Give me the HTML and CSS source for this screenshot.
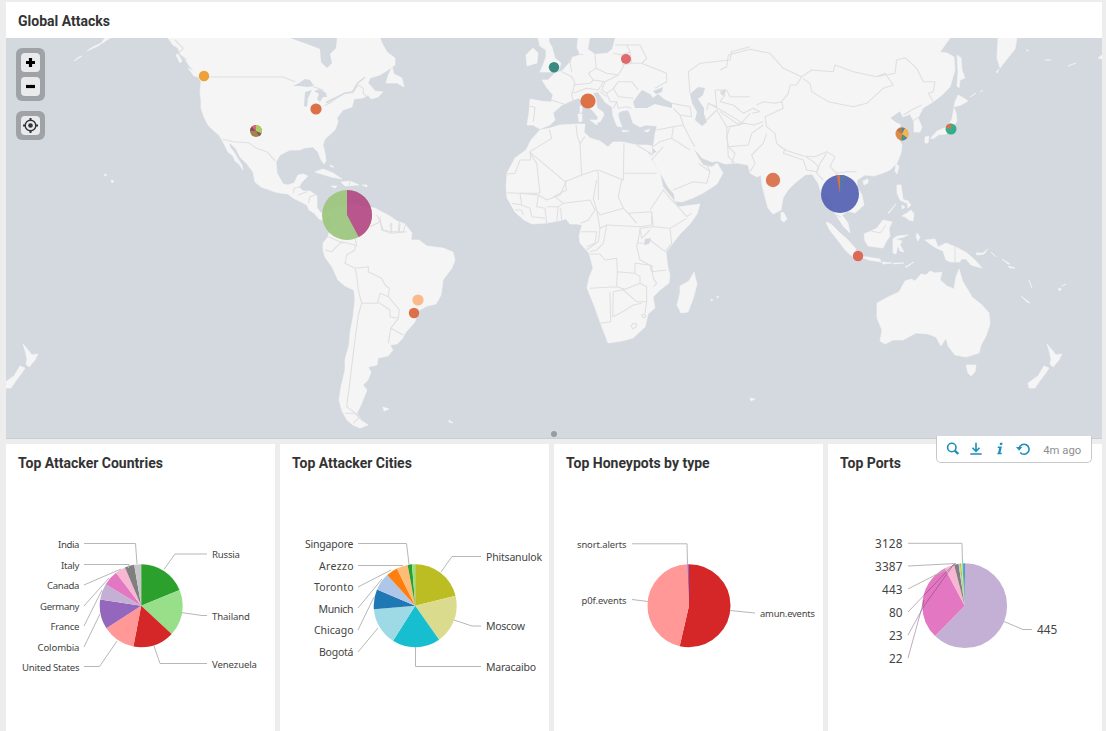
FILE: index.html
```html
<!DOCTYPE html>
<html lang="en">
<head>
<meta charset="utf-8">
<title>Global Attacks</title>
<link rel="stylesheet" href="styles.css">
</head>
<body>
<main class="dashboard">
  <section class="panel map-panel">
    <h2 class="panel-title">Global Attacks</h2>
    <div class="map">
      <svg class="map-canvas" viewBox="6 38 1096 400">
        <g class="land">
          <!-- Americas -->
          <path d="M168 38L173 45 178 48 180 54 184 58 190 67 197 74 201 82 200 92 201 100 201 108 204 117 208 125 214 131 219 135 223 142 228 152 233 156 235 161 239 164 243 170 242 165 238 159 234 152 230 147 229 142 232 145 236 149 240 157 247 164 253 172 255 182 261 187 267 189 275 192 280 193 288 194 293 198 299 201 307 205 309 210 314 213 319 219 324 221 330 216 331 225 328 237 323 243 323 250 325 257 332 267 338 280 345 286 354 290 355 300 353 317 350 333 349 345 345 360 345 370 341 387 339 400 342 411 347 420 353 425 360 428 368 425 361 420 357 413 361 405 367 390 363 385 368 380 371 372 368 367 377 365 378 358 388 356 393 350 390 345 397 344 402 339 406 332 415 322 418 311 427 306 436 304 441 295 443 280 452 268 455 260 453 252 443 248 427 246 419 240 411 240 412 233 405 224 397 221 388 215 382 212 375 208 366 207 350 203 335 207 325 212 321 213 317 208 317 196 310 191 303 191 299 187 302 182 308 176 303 174 298 175 294 183 288 185 283 184 277 173 276 162 280 155 290 150 300 150 304 148 313 147 318 152 321 160 324 164 326 161 325 153 323 145 325 139 335 130 338 122 337 118 343 110 352 107 354 99 363 98 368 95 371 99 378 97 383 92 375 91 368 83 370 78 380 75 388 70 395 65 395 58 387 52 383 45 380 38Z"/>
          <path d="M386 83L388 76 392 67 394 74 402 78 404 87 397 83ZM315 172L323 169 333 173 342 179 331 177ZM341 182L350 181 359 185 345 186ZM331 186L337 186 335 188ZM362 185L367 185 367 187ZM383 407L389 409 384 411ZM330 165L334 167 331 167ZM176 55L178 54 182 61 180 63ZM188 68L195 72 199 77 194 76Z"/>
          <path d="M110 38L104 42 98 46 87 51 91 48 101 43 105 38ZM82 56L74 61 79 57ZM111 180l3 1-2 2ZM104 174l3 1-2 1ZM449 420l4 3-4-1Z"/>
          <!-- Eurasia -->
          <path d="M578 38L577 47 580 55 573 57 570 62 562 71 555 73 548 80 542 80 547 88 553 95 551 102 541 101 530 99 529 113 527 125 533 125 540 129 550 125 555 120 553 113 562 105 573 100 579 98 585 104 592 110 598 117 597 122 600 122 604 115 603 112 597 108 596 99 593 93 598 92 605 102 612 107 613 116 617 126 622 127 619 119 618 113 622 111 628 110 630 114 633 123 640 127 646 125 657 126 655 134 653 148 657 152 650 155 654 162 662 176 668 187 674 194 675 201 682 202 693 198 703 193 711 188 717 184 723 173 717 163 712 167 703 165 698 157 693 148 697 152 702 158 712 162 717 161 725 164 737 163 748 165 750 173 757 177 761 175 762 185 765 197 768 208 773 214 781 210 783 198 788 190 795 183 805 175 812 174 818 183 822 195 830 198 832 207 835 213 843 226 850 233 848 223 842 215 848 211 855 213 864 205 862 195 857 187 857 180 865 175 874 176 883 173 890 170 897 163 901 153 902 145 895 132 901 125 895 122 890 118 900 111 903 117 910 114 914 122 914 132 920 132 922 127 918 118 923 108 933 102 942 95 950 87 955 70 954 57 947 53 940 52 950 38Z"/>
          <path d="M538 38L540 46 546 50 546 57 543 65 540 72 552 72 559 70 561 63 555 58 552 47 549 42 549 38ZM526 55L533 48 538 53 537 63 527 66ZM580 106l2 0 0 6-2 1ZM578 114l4 0 0 7-3 1ZM590 120l8 0-1 5ZM622 130l7 1-6 1ZM644 131l6-2-2 3ZM584 46l5-1-1 5-4 0Z"/>
          <!-- Africa and Madagascar -->
          <path d="M540 130L550 128 560 125 577 124 585 124 584 132 590 138 600 141 608 147 613 142 623 142 637 145 647 145 652 146 652 153 648 152 652 160 660 173 663 187 672 198 678 207 700 204 697 214 690 224 680 234 673 243 666 252 668 268 670 275 669 283 660 290 653 297 655 308 648 314 645 327 633 338 622 341 608 343 605 335 600 322 594 305 587 288 589 278 593 268 589 253 580 243 579 236 582 225 577 224 570 224 566 219 558 221 547 223 532 224 524 220 515 212 507 198 506 187 507 173 515 158 526 150 531 140Z"/>
          <path d="M694 272L697 284 693 299 688 312 681 313 677 305 680 293 680 286 689 281ZM711 299l2 1-2 1ZM717 296l2 1-2 1Z"/>
          <!-- Asian islands -->
          <path d="M781 212l3 1 3 6-3 3-3-2ZM826 222L831 224 839 232 848 240 856 249 853 257 846 251 836 238 829 229ZM858 256L867 257 880 259 881 262 869 260ZM864 234L871 231 877 228 883 220 892 222 889 229 890 236 886 242 883 248 868 246 865 241ZM893 239L897 236 908 235 904 237 895 239 902 241 900 245 904 252 900 251 898 245 896 254 893 253ZM882 262l10 1-9 1ZM893 263l11 0-9 1ZM905 267l9-5-7 5ZM917 233l3 4-2 4-2-4ZM925 240l10-1 3 8 8-4 12 5 9 5 8 7 7 8-11-3-5-6-5 0-1 3-9 0-5-2-3-9-7-3-6-4ZM976 253l7 0 5-4-4 5-7 1ZM991 252l5 5ZM1002 259l8 5-2 0ZM1008 266l7 2-5 0ZM897 185l4 0 1 7 1 7 5 3-2 1-6-3-3-7ZM902 216l5-3 4-3 3 4-1 7-4-1-4-3ZM888 213l8-9-7 9ZM902 205l3 2-3 2ZM907 200l4 5-3 3ZM896 164l3 2-2 8-2-3ZM863 181l5-2 0 4-4 2Z"/>
          <path d="M957 55L961 58 962 70 965 78 960 80 959 88 957 86 958 72ZM958 95L962 97 968 101 961 105 954 107 955 102ZM954 108L956 113 957 121 951 130 946 134 937 135 930 139 937 131 947 127 952 119ZM925 137l4-1-1 7-3 0ZM932 136l6-1-5 4ZM998 38L1017 38 1015 49 1007 59 1000 68 997 58ZM996 72l3-3-2 4ZM970 97l6-4ZM980 92l3-2ZM1026 50l3 1ZM1068 66l8-3ZM1098 58l4-3 0 4ZM1045 60l6 0Z"/>
          <!-- Oceania -->
          <path d="M959 269L963 282 968 290 972 297 982 305 989 313 990 324 986 336 981 345 979 353 966 357 955 355 948 346 946 338 941 346 936 337 928 334 916 333 903 340 893 340 885 344 880 341 882 330 877 318 877 303 888 297 899 292 905 281 911 279 915 281 921 274 926 275 930 271 935 273 942 272 940 280 947 286 954 289 956 277ZM966 365l10 0-1 7-4 4-3-3ZM1021 296l9 7-3-1ZM1029 280l3 8ZM1058 289l3-1-1 3ZM1062 286l4-2ZM750 398l5 1-4 2Z"/>
          <path id="nz" d="M1047 344L1052 350 1056 355 1062 354 1059 360 1053 367 1050 364 1051 359 1049 350ZM1044 366L1049 368 1045 374 1039 382 1035 388 1029 388 1028 383 1038 376Z"/>
          <use href="#nz" x="-1024"/>
        </g>
        <g class="water">
          <path d="M290 38L307 44 320 49 321 62 327 68 332 63 330 54 336 48 337 38ZM293 86L299 83 305 79 310 80 314 86 307 87 300 86ZM305 92L312 90 308 98 307 107 304 106ZM314 91L320 89 326 93 327 97 323 97 320 102 317 99 319 94ZM322 107L330 102 338 98 329 104Z"/>
          <path d="M590 38L615 38 612 49 607 53 595 54 588 49ZM635 108L633 102 638 95 642 90 650 94 653 98 658 94 664 99 672 103 672 108 663 106 655 104 647 108ZM653 91L663 87 662 92 656 94ZM690 94L698 87 705 88 703 95 698 99 704 108 704 114 707 122 702 126 695 120 697 112 692 103ZM645 239l6-1-2 6-5 1ZM720 93l5-4 1 2-3 5Z"/>
        </g>
        <g class="borders">
          <!-- North America -->
          <g transform="translate(150 30) scale(.33333)">
            <path d="M172 141H400L435 155M490 170L520 180M530 215L560 200 585 190 608 188 625 165 640 175 640 190 650 200M218 328L250 335 295 338 320 355 350 365 375 392M430 490L432 475 450 470M445 495L470 485M475 520L480 500 495 495M660 590L690 575 680 555M690 575L700 600 725 605 720 580M748 575L745 605 720 605M768 580L760 605 745 605M75 30L100 55 85 70 110 90M600 450L598 465"/>
            <path class="river" d="M528 218L560 204 582 190 608 185 622 160 645 142"/>
          </g>
          <!-- South America -->
          <g transform="translate(300 200) scale(.33333)">
            <path d="M75 150L95 155 125 125 165 135 165 150 140 165 135 190 165 205 205 200 205 215 245 235 255 255 268 265 265 290 240 280 232 310 185 310 175 270 170 225 165 205M185 310L175 345 165 420 155 500 148 560 140 620 180 650 160 670M135 640L165 640 190 665M265 290L298 330 295 355 270 350 270 330 232 305M295 355L272 385 310 405M272 385L265 430M165 110L170 140M85 110L130 130M240 50L245 90 275 100 320 95M275 68L275 100M300 70L298 95"/>
          </g>
          <!-- Europe, North Africa, Middle East -->
          <g transform="translate(490 30) scale(.33333)">
            <path d="M118 228L135 232 130 275M182 210L222 222M215 125L245 140 255 160 245 195 250 215M245 80L240 100 245 125M270 72L280 75M315 70L318 115 295 130 310 150 300 160 250 165M318 115L350 130 385 135 400 110 395 75 370 70M310 150L345 155 385 135M250 190L290 175 325 180 340 155M345 155L335 180 350 190 370 175 385 155 425 155 445 180M350 190L360 215 380 215 370 235M370 175L385 200 430 205M380 215L385 235 410 230 425 235M330 185L350 200M395 75L420 65 410 45 375 45M420 65L425 100 400 105M410 45L450 45 470 85 455 100 425 100M455 100L530 130 530 155 495 175M545 220L600 230 605 260 570 255 550 235M570 255L580 285 550 290 500 300M550 290L545 325 510 335 490 350M545 325L600 360M580 285L605 335 615 350M650 240L655 220 680 230 675 180 710 180 720 200 780 200M650 270L680 240 710 290 715 380 735 400M710 290L750 285 780 250M600 190L595 125 630 100 720 90 725 65 780 50M655 220L710 250 760 280M440 345L490 375M485 390L520 350M550 480L610 455 650 460 660 425 650 405M660 425L625 400"/>
            <path d="M178 298L185 325 120 365 122 390 90 390 75 430 50 432M118 365L225 455M120 370L140 400 150 490 90 490M225 455L275 435 320 420 325 430 325 510M275 435L270 340 285 320M258 285L262 320 270 340M325 420L400 450 402 340M400 430H500M225 455L230 480 190 500"/>
          </g>
          <!-- Africa -->
          <g transform="translate(490 180) scale(.33333)">
            <path d="M50 38L90 40 145 45 170 60 210 45 230 0M145 45L140 80 165 85 170 130M90 40L95 75 120 85 125 110 165 115M95 75L65 70M75 90L95 90 100 105M170 80H205L200 125M205 80L220 70 300 60 315 90 295 120 272 130M195 50L220 70M212 85L215 120M320 0L310 55 320 90 330 105 400 85 385 50 395 0M320 90L330 145 350 135 450 140 485 135 485 95 415 100 400 85M415 100L440 130M480 90L510 45 520 30 540 55 560 75 590 110 605 100M485 95L490 140 450 145M490 140L540 145 545 190 525 215 480 180M540 145L590 115M450 145L445 180 440 200 450 240 490 260M330 145L325 185 290 210M272 155H320L315 190 290 200M350 135L340 190 320 210 300 215M300 222L330 222 345 240 380 235 382 275 435 280 435 250 480 255 485 275 530 270M382 275L380 320 300 325M380 320L405 328 370 335 368 410 390 400 430 375 455 370M400 330L440 365 470 365 470 320 450 310 400 330M450 310L450 290 435 280M360 335L362 425 330 430M470 365L465 400M485 260L490 295 500 310 490 320M450 145L455 175 480 150M440 190L460 190M423 438L430 430 440 432 438 442 428 446ZM455 405L463 402 468 408 460 414Z"/>
          </g>
          <!-- Central, South and East Asia -->
          <g transform="translate(720 30) scale(.33333)">
            <path d="M0 120L20 110 25 75 90 58 150 70 190 115 245 140 275 120 340 125 345 105 400 125 470 140 495 130 520 165 490 175 440 220 400 230 325 215 275 185 270 160 248 145M470 140L525 130 530 90 555 83 590 115 610 155 645 155 640 185 625 190 640 215M245 140L230 165 210 165 205 190 185 215 165 220 130 215 110 225M185 215L190 235 135 260 140 290 165 310 170 340 195 360 250 378 285 380 320 365 345 380M0 180L15 195 0 215 40 225 70 250 100 235 120 245 95 250M0 245L50 280 75 280 100 285 130 275M75 280L30 290 20 320 25 350 45 370 35 400M25 350L85 345 95 310 130 285M140 310L130 340 95 375 105 400 90 425M195 355L190 370 250 390M250 390L260 420 290 425 295 410 280 395 255 378M320 370L300 400 290 430 310 450M345 380L330 410 350 430 380 425 410 425M350 430L355 455 380 460M550 255L575 240 605 225M575 275L595 262"/>
          </g>
          <path d="M871 231L880 233 886 225M955 247V263M834 214L841 217"/>
        </g>
        <!-- Attack markers -->
        <g class="markers">
          <circle cx="204" cy="76" r="5.2" fill="#ec9a29"/>
          <circle cx="316" cy="109" r="5.6" fill="#d9673c"/>
          <circle cx="554" cy="67.300" r="5.200" fill="#2b8379"/>
          <circle cx="626" cy="59" r="5" fill="#dd5f62"/>
          <circle cx="588" cy="101" r="7.600" fill="#dc683a"/>
          <circle cx="773" cy="180" r="7.200" fill="#d96f49"/>
          <circle cx="858" cy="256" r="5.200" fill="#df5f49"/>
          <circle cx="418" cy="300" r="5.600" fill="#fbb583"/>
          <circle cx="414" cy="313" r="5.200" fill="#d9673c"/>
          <g transform="translate(347 215) rotate(-90)"><circle r="25" fill="#9dc57d"/><circle class="wedge" r="12.5" stroke-width="25" pathLength="100" stroke="#b34a85" stroke-dasharray="42.200 100"/></g>
          <g transform="translate(840 194) rotate(-90)"><circle r="19" fill="#5461b3"/><circle class="wedge" r="9.500" stroke-width="19" pathLength="100" stroke="#4a6da8" stroke-dasharray="6 100"/><circle class="wedge" r="9.500" stroke-width="19" pathLength="100" stroke="#d9673c" stroke-dasharray="2.800 100" stroke-dashoffset="-97.200"/></g>
          <g transform="translate(256 131) rotate(-90)"><circle r="6" fill="#a17938"/><circle class="wedge" r="3" stroke-width="6" pathLength="100" stroke="#a5cc58" stroke-dasharray="32 100"/><circle class="wedge" r="3" stroke-width="6" pathLength="100" stroke="#75505c" stroke-dasharray="10 100" stroke-dashoffset="-32"/><circle class="wedge" r="3" stroke-width="6" pathLength="100" stroke="#75405f" stroke-dasharray="12 100" stroke-dashoffset="-76"/><circle class="wedge" r="3" stroke-width="6" pathLength="100" stroke="#d75b70" stroke-dasharray="12 100" stroke-dashoffset="-88"/></g>
          <g transform="translate(902 134) rotate(-90)"><circle r="6.500" fill="#e08440"/><circle class="wedge" r="3.250" stroke-width="6.500" pathLength="100" stroke="#477f9f" stroke-dasharray="8 100"/><circle class="wedge" r="3.250" stroke-width="6.500" pathLength="100" stroke="#efb640" stroke-dasharray="28 100" stroke-dashoffset="-8"/><circle class="wedge" r="3.250" stroke-width="6.500" pathLength="100" stroke="#506eae" stroke-dasharray="5 100" stroke-dashoffset="-36"/><circle class="wedge" r="3.250" stroke-width="6.500" pathLength="100" stroke="#35917e" stroke-dasharray="11 100" stroke-dashoffset="-41"/><circle class="wedge" r="3.250" stroke-width="6.500" pathLength="100" stroke="#b9713f" stroke-dasharray="16 100" stroke-dashoffset="-84"/></g>
          <g transform="translate(951 129) rotate(-90)"><circle r="5.500" fill="#29a885"/><circle class="wedge" r="2.750" stroke-width="5.500" pathLength="100" stroke="#d9673c" stroke-dasharray="20 100" stroke-dashoffset="-80"/></g>
        </g>
      </svg>
      <div class="map-controls">
        <div class="control-group">
          <button class="map-button"><svg viewBox="0 0 19 19"><path d="M9.500 5v9M5 9.500h9" stroke-width="3.200"/></svg></button>
          <button class="map-button"><svg viewBox="0 0 19 19"><path d="M5 9.500h9" stroke-width="3.200"/></svg></button>
        </div>
        <div class="control-group">
          <button class="map-button"><svg class="locate" viewBox="0 0 19 19"><circle cx="9.500" cy="9.500" r="5.300"/><circle class="dot" cx="9.500" cy="9.500" r="2.300"/><path d="M9.500 2v3M9.500 14v3M2 9.500h3M14 9.500h3" stroke-width="2"/></svg></button>
        </div>
      </div>
      <span class="resize-handle"></span>
    </div>
  </section>

  <div class="row">
    <section class="panel">
      <h2 class="panel-title">Top Attacker Countries</h2>
      <svg class="chart countries" viewBox="6 482 269 249">
        <g class="pie" transform="translate(141.200 605.700) rotate(-90)" stroke-width="41.500">
          <circle r="20.750" pathLength="100" stroke="#2ca02c" stroke-dasharray="18.800 100"/>
          <circle r="20.750" pathLength="100" stroke="#98df8a" stroke-dasharray="18.100 100" stroke-dashoffset="-18.800"/>
          <circle r="20.750" pathLength="100" stroke="#d62728" stroke-dasharray="16.200 100" stroke-dashoffset="-36.900"/>
          <circle r="20.750" pathLength="100" stroke="#ff9896" stroke-dasharray="12.700 100" stroke-dashoffset="-53.100"/>
          <circle r="20.750" pathLength="100" stroke="#9467bd" stroke-dasharray="11.700 100" stroke-dashoffset="-65.800"/>
          <circle r="20.750" pathLength="100" stroke="#c5b0d5" stroke-dasharray="6.200 100" stroke-dashoffset="-77.500"/>
          <circle r="20.750" pathLength="100" stroke="#e377c2" stroke-dasharray="5.900 100" stroke-dashoffset="-83.700"/>
          <circle r="20.750" pathLength="100" stroke="#f7b6d2" stroke-dasharray="4 100" stroke-dashoffset="-89.600"/>
          <circle r="20.750" pathLength="100" stroke="#7f7f7f" stroke-dasharray="3.600 100" stroke-dashoffset="-93.600"/>
          <circle r="20.750" pathLength="100" stroke="#c7c7c7" stroke-dasharray="2.800 100" stroke-dashoffset="-97.200"/>
        </g>
        <path class="leaders" d="M84 543.500H135.500L137 564M84 564.500H129L128.500 568M84 585L121 569M84 606L109 578M84 626L102 590M84 647L100 614M84 666.500H99.500L117 641M207 554H175L164 569.500M207 615.500H202L181 612.500M207 663.500H160L154 646"/>
        <g class="end">
          <text x="79.500" y="548" textLength="21.500">India</text><text x="79.500" y="569" textLength="18.500">Italy</text><text x="79.500" y="589" textLength="32.500">Canada</text><text x="79.500" y="610" textLength="39.500">Germany</text><text x="79.500" y="630" textLength="29">France</text><text x="79.500" y="651" textLength="42">Colombia</text><text x="79.500" y="671" textLength="57.500">United States</text>
        </g>
        <text x="212" y="558" textLength="28">Russia</text><text x="212" y="620" textLength="38">Thailand</text><text x="212" y="668" textLength="45">Venezuela</text>
      </svg>
    </section>

    <section class="panel">
      <h2 class="panel-title">Top Attacker Cities</h2>
      <svg class="chart cities" viewBox="280 482 269 249">
        <g class="pie" transform="translate(415.200 605.700) rotate(-90)" stroke-width="41.500">
          <circle r="20.750" pathLength="100" stroke="#bcbd22" stroke-dasharray="21.100 100"/>
          <circle r="20.750" pathLength="100" stroke="#dbdb8d" stroke-dasharray="19.100 100" stroke-dashoffset="-21.100"/>
          <circle r="20.750" pathLength="100" stroke="#17becf" stroke-dasharray="18.800 100" stroke-dashoffset="-40.200"/>
          <circle r="20.750" pathLength="100" stroke="#9edae5" stroke-dasharray="14.600 100" stroke-dashoffset="-59"/>
          <circle r="20.750" pathLength="100" stroke="#1f77b4" stroke-dasharray="7.800 100" stroke-dashoffset="-73.600"/>
          <circle r="20.750" pathLength="100" stroke="#aec7e8" stroke-dasharray="6.800 100" stroke-dashoffset="-81.400"/>
          <circle r="20.750" pathLength="100" stroke="#ff7f0e" stroke-dasharray="4.500 100" stroke-dashoffset="-88.200"/>
          <circle r="20.750" pathLength="100" stroke="#ffbb78" stroke-dasharray="4.300 100" stroke-dashoffset="-92.700"/>
          <circle r="20.750" pathLength="100" stroke="#2ca02c" stroke-dasharray="1.700 100" stroke-dashoffset="-97"/>
          <circle r="20.750" pathLength="100" stroke="#98df8a" stroke-dasharray="1.300 100" stroke-dashoffset="-98.700"/>
        </g>
        <path class="leaders" d="M358 543.500H406.500L409 564M358 565.500H403M358 587L391 570M358 608L382 579M358 630L374 597M358 652L378 628M481 556.500H452L441 572M481 626H472L454 620M481 666.500H415.500V647"/>
        <g class="end">
          <text x="353.500" y="548" textLength="48.500">Singapore</text><text x="353.500" y="569.700" textLength="34.500">Arezzo</text><text x="353.500" y="591.300" textLength="39.500">Toronto</text><text x="353.500" y="612.800" textLength="35">Munich</text><text x="353.500" y="634.300" textLength="39.500">Chicago</text><text x="353.500" y="656" textLength="34.500">Bogotá</text>
        </g>
        <text x="486" y="561" textLength="56">Phitsanulok</text><text x="486" y="630" textLength="39">Moscow</text><text x="486" y="671" textLength="50">Maracaibo</text>
      </svg>
    </section>

    <section class="panel">
      <h2 class="panel-title">Top Honeypots by type</h2>
      <svg class="chart honeypots" viewBox="554 482 269 249">
        <g class="pie" transform="translate(689 605.700) rotate(-90)" stroke-width="41.500">
          <circle r="20.750" pathLength="100" stroke="#d62728" stroke-dasharray="53.700 100"/>
          <circle r="20.750" pathLength="100" stroke="#ff9896" stroke-dasharray="45.600 100" stroke-dashoffset="-53.700"/>
          <circle r="20.750" pathLength="100" stroke="#9467bd" stroke-dasharray=".7 100" stroke-dashoffset="-99.300"/>
        </g>
        <path class="leaders" d="M632 543.800H687L687.500 564M632 599.500L648 601.500M730 610.500L755 613"/>
        <g class="end"><text x="626.500" y="548" textLength="49.500">snort.alerts</text><text x="626.500" y="604" textLength="45">p0f.events</text></g>
        <text x="760" y="617" textLength="55">amun.events</text>
      </svg>
    </section>

    <section class="panel ports-panel">
      <h2 class="panel-title">Top Ports</h2>
      <svg class="chart ports" viewBox="828 482 274 249">
        <g class="pie" transform="translate(964.700 605.700) rotate(-90)" stroke-width="42.400">
          <circle r="21.200" pathLength="100" stroke="#c5b0d5" stroke-dasharray="62.300 100"/>
          <circle r="21.200" pathLength="100" stroke="#e377c2" stroke-dasharray="29.900 100" stroke-dashoffset="-62.300"/>
          <circle r="21.200" pathLength="100" stroke="#f7b6d2" stroke-dasharray="3.700 100" stroke-dashoffset="-92.200"/>
          <circle r="21.200" pathLength="100" stroke="#7f7f7f" stroke-dasharray="1.700 100" stroke-dashoffset="-95.900"/>
          <circle r="21.200" pathLength="100" stroke="#c7c7c7" stroke-dasharray=".5 100" stroke-dashoffset="-97.600"/>
          <circle r="21.200" pathLength="100" stroke="#bcbd22" stroke-dasharray=".5 100" stroke-dashoffset="-98.100"/>
          <circle r="21.200" pathLength="100" stroke="#dbdb8d" stroke-dasharray=".5 100" stroke-dashoffset="-98.600"/>
          <circle r="21.200" pathLength="100" stroke="#17becf" stroke-dasharray=".5 100" stroke-dashoffset="-99.100"/>
          <circle r="21.200" pathLength="100" stroke="#1f77b4" stroke-dasharray=".4 100" stroke-dashoffset="-99.600"/>
        </g>
        <path class="leaders" d="M908 543.300H962L962.500 563M908 566L956 563.500M908 589L947 569M1032 629.500H1023L1004 621.500"/>
        <path class="leaders dark" d="M908 612L952 566 955 564M908 635L924 606 954 564M908 658L924 600"/>
        <g class="end"><text x="902.500" y="548" textLength="27.500">3128</text><text x="902.500" y="571" textLength="27.500">3387</text><text x="902.500" y="594" textLength="20.500">443</text><text x="902.500" y="617">80</text><text x="902.500" y="640">23</text><text x="902.500" y="663">22</text></g>
        <text x="1037" y="634">445</text>
      </svg>
      <div class="panel-tools">
        <svg class="tool" viewBox="0 0 14 14"><circle cx="5.800" cy="5.500" r="4.200"/><path class="thick" d="M8.800 8.500L12.300 12"/></svg>
        <svg class="tool" viewBox="0 0 14 14"><path d="M7 .8v8.400M3.500 5.800L7 9.300l3.500-3.500M1.300 12h11.400"/></svg>
        <svg class="tool" viewBox="0 0 14 14"><path class="solid" d="M7.200.8h2.400L9 3.100H6.600zM5 4.500h3.900L7.400 10.800h1.500l-.4 1.500H4.200l.4-1.500h.5l1.100-4.800H4.600z"/></svg>
        <svg class="tool" viewBox="0 0 14 14"><path d="M4.200 10.400A5 5 0 1 0 3.200 6"/><path class="solid" d="M0 5h6.200L3.100 8.700z"/></svg>
        <span class="age">4m ago</span>
      </div>
    </section>
  </div>
</main>
</body>
</html>
```

FILE: styles.css
```css
* { box-sizing: border-box; }
body {
  margin: 0;
  background: #ededed;
  font-family: Roboto, "Liberation Sans", sans-serif;
  overflow: hidden;
}
.dashboard {
  height: 731px;
  padding: 2px 4px 0 6px;
  display: flex;
  flex-direction: column;
  gap: 5px;
}
.panel { background: #fff; position: relative; }
.panel-title {
  margin: 0;
  height: 38px;
  padding: 0 12px;
  font-size: 14px;
  font-weight: 700;
  line-height: 38px;
  color: #333;
  white-space: nowrap;
}
.map-panel .panel-title { height: 36px; line-height: 38px; }
.map {
  position: relative;
  height: 401px;
  background: #d4d9e0;
  border-bottom: 1px solid #cacdd3;
}
.map-canvas { display: block; width: 100%; height: 400px; }
.land { fill: #f5f5f5; stroke: #f5f5f5; stroke-width: .6; stroke-linejoin: round; }
.water { fill: #d4d9e0; }
.borders { fill: none; stroke: #e0dfe0; stroke-width: 1; stroke-linejoin: round; }
.borders g { stroke-width: 3.2; }
.borders .river { stroke: #d4d9e0; stroke-width: 4; }
.markers { opacity: .93; }
.wedge { fill: none; }

.map-controls {
  position: absolute;
  left: 10px;
  top: 10px;
  display: flex;
  flex-direction: column;
  gap: 10px;
}
.control-group {
  display: flex;
  flex-direction: column;
  gap: 5px;
  padding: 5px;
  background: #9fa3a7;
  border-radius: 6px;
}
.map-button {
  width: 19px;
  height: 19px;
  padding: 0;
  border: 0;
  border-radius: 4px;
  background: #e9eaec;
}
.map-button svg { display: block; width: 19px; height: 19px; fill: none; stroke: #000; }
.map-button .locate { stroke: #303438; stroke-width: 1.4; }
.locate .dot { fill: #303438; stroke: none; }
.resize-handle {
  position: absolute;
  left: 545px;
  bottom: 1px;
  width: 6px;
  height: 6px;
  border-radius: 50%;
  background: #999da2;
}

.row {
  flex: 1;
  display: grid;
  grid-template-columns: 269px 269px 269px 274px;
  gap: 5px;
}
.chart { display: block; width: 100%; height: 249px; font-family: "Noto Sans", "Open Sans", sans-serif; fill: #444; }
.countries { font-size: 9.6px; }
.cities { font-size: 10.5px; }
.honeypots { font-size: 9.4px; }
.ports { font-size: 11.8px; }
.end { text-anchor: end; }
.pie { fill: none; }
.leaders { fill: none; stroke: #b7b7b7; stroke-width: 1; }
.leaders.dark { stroke: #603060; stroke-opacity: .4; }

.panel-tools {
  position: absolute;
  top: -8px;
  right: 10px;
  width: 156px;
  height: 27px;
  padding: 0 9px;
  display: flex;
  align-items: center;
  gap: 9.3px;
  background: #fff;
  border: 1px solid #c6c8ca;
  border-top: 0;
  border-radius: 0 0 5px 5px;
}
.tool { flex: none; width: 14px; height: 14px; fill: none; stroke: #1e8fbb; stroke-width: 1.6; }
.tool .thick { stroke-width: 2.4; }
.tool .solid { fill: #1e8fbb; stroke: none; }
.age { margin: 2px 0 0 4px; font-size: 11.3px; color: #8f8f8f; white-space: nowrap; }
```
